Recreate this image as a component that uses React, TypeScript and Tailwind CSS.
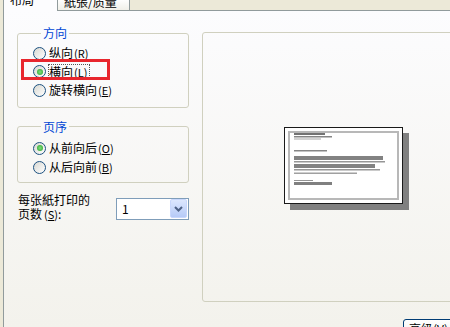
import React from "react";

const font = "font-['Noto_Sans_CJK_SC','Noto_Sans',sans-serif]";

function Radio({ checked }: { checked?: boolean }) {
  return (
    <span className="w-[13px] h-[13px] shrink-0 rounded-full border border-[#1C5180] bg-linear-to-br from-[#D8D8D2] to-white flex items-center justify-center">
      {checked && (
        <span className="w-[6px] h-[6px] rounded-full bg-radial from-[#7EE07E] to-[#1FA11F]" />
      )}
    </span>
  );
}

function Option({
  label,
  hotkey,
  checked,
  focused,
  rowHeight,
}: {
  label: string;
  hotkey: string;
  checked?: boolean;
  focused?: boolean;
  rowHeight: string;
}) {
  return (
    <label className={`flex items-center gap-[3px] ${rowHeight}`}>
      <Radio checked={checked} />
      <span
        className={
          focused
            ? "-ml-px border border-dotted border-[#555] pr-[2px] leading-[14px]"
            : "leading-[14px]"
        }
      >
        {label}
        <span className="ml-[1px] text-[11px]">
          (<u>{hotkey}</u>)
        </span>
      </span>
    </label>
  );
}

function Group({
  title,
  children,
  className,
}: {
  title: string;
  children: React.ReactNode;
  className?: string;
}) {
  return (
    <fieldset
      className={`w-[172px] border border-[#D0D0BF] rounded-[3px] pl-[15px] ${className ?? ""}`}
    >
      <legend className="ml-[8px] px-[2px] text-[#0046D5] leading-[16px]">
        {title}
      </legend>
      {children}
    </fieldset>
  );
}

function PageThumb() {
  const lines = [
    { y: 0, h: 2, w: 31, c: "#737373" },
    { y: 3, h: 1.5, w: 38, c: "#858585" },
    { y: 5.5, h: 1, w: 27, c: "#a8a8a8" },
    { y: 17, h: 1.5, w: 33, c: "#858585" },
    { y: 23, h: 4, w: 89, c: "#828282" },
    { y: 28, h: 1.5, w: 91, c: "#969696" },
    { y: 31, h: 4, w: 81, c: "#828282" },
    { y: 36, h: 1.5, w: 86, c: "#969696" },
    { y: 39.5, h: 1.5, w: 63, c: "#a0a0a0" },
    { y: 47, h: 1, w: 19, c: "#949494" },
    { y: 49, h: 3, w: 38, c: "#808080" },
  ];
  return (
    <div className="ml-[81px] mt-[94px] w-[119px] h-[77px] border border-[#1a1a1a] bg-white p-[3px] shadow-[6px_6px_0_#808080]">
      <div className="w-full h-full border-2 border-[#B8B8B8] bg-white">
        <svg width="107" height="65" viewBox="0 0 107 65">
          {lines.map((l, i) => (
            <rect key={i} x={4} y={l.y} width={l.w} height={l.h} fill={l.c} />
          ))}
        </svg>
      </div>
    </div>
  );
}

export default function App() {
  return (
    <div
      className={`relative w-[450px] h-[327px] overflow-hidden bg-[#ECE9D8] text-[12px] text-black ${font}`}
    >
      {/* tabs */}
      <div className="flex h-[11px]">
        <div className="w-[3px]" />
        <div className="w-[55px] border-x border-[#919B9C] bg-[#FCFCFE] overflow-hidden pl-[6px]">
          <div className="-mt-[7px] leading-[14px]">布局</div>
        </div>
        <div className="w-[72px] border-r border-b border-[#919B9C] bg-linear-to-b from-[#FEFEFE] to-[#F0EFE8] overflow-hidden pl-[6px]">
          <div className="-mt-[5px] leading-[14px]">紙張/质量</div>
        </div>
        <div className="flex-1 border-b border-[#919B9C]" />
      </div>

      {/* tab page */}
      <div className="ml-[3px] w-[520px] h-[316px] border-l border-[#919B9C] bg-linear-to-b from-[#FCFCFE] to-[#F3F2EC] flex items-start gap-[13px] pl-[13px] pt-[14px]">
        <div className="w-[172px] shrink-0 flex flex-col">
          <Group title="方向" className="pt-[3px] pb-[7px]">
            <Option label="纵向" hotkey="R" rowHeight="h-[18.5px]" />
            <Option label="横向" hotkey="L" checked focused rowHeight="h-[18.5px]" />
            <Option label="旋转横向" hotkey="E" rowHeight="h-[18.5px]" />
          </Group>
          <Group title="页序" className="mt-[11px] pt-[4px] pb-[5px]">
            <Option label="从前向后" hotkey="O" checked rowHeight="h-[19px]" />
            <Option label="从后向前" hotkey="B" rowHeight="h-[19px]" />
          </Group>
          <div className="mt-[10px] flex">
            <div className="w-[99px] pl-[1px] leading-[14px]">
              <div>每张紙打印的</div>
              <div>
                页数<span className="ml-[2px] text-[11px]">(<u>S</u>)</span>:
              </div>
            </div>
            <div className="mt-[5px] w-[73px] h-[22px] border border-[#7F9DB9] bg-white flex items-center">
              <span className="flex-1 pl-[5px]">1</span>
              <span className="w-[17px] h-[19px] mr-[1px] rounded-[2px] border border-[#C8D7FC] bg-linear-to-b from-[#DCE7FE] to-[#B6CAF7] flex items-center justify-center">
                <svg width="9" height="6" viewBox="0 0 9 6">
                  <path
                    d="M1 1 L4.5 4.5 L8 1"
                    fill="none"
                    stroke="#4D6185"
                    strokeWidth="2"
                  />
                </svg>
              </span>
            </div>
          </div>
        </div>

        <div className="w-[310px] shrink-0 flex flex-col">
          <div className="mt-[7px] w-[310px] h-[270px] shrink-0 border border-[#D0D0BF] rounded-[3px]">
            <PageThumb />
          </div>
          <button className="mt-[17px] ml-[201px] w-[78px] h-[23px] shrink-0 border border-[#003C74] rounded-[3px] bg-linear-to-b from-white to-[#ECEBE6] pl-[5px] pt-[2px] leading-[14px] flex items-start">
            高级(<u>V</u>)...
          </button>
        </div>
      </div>

      {/* red annotation box */}
      <div className="absolute left-[21px] top-[59px] w-[89px] h-[21px] border-[3px] border-[#E8262D]" />
    </div>
  );
}
